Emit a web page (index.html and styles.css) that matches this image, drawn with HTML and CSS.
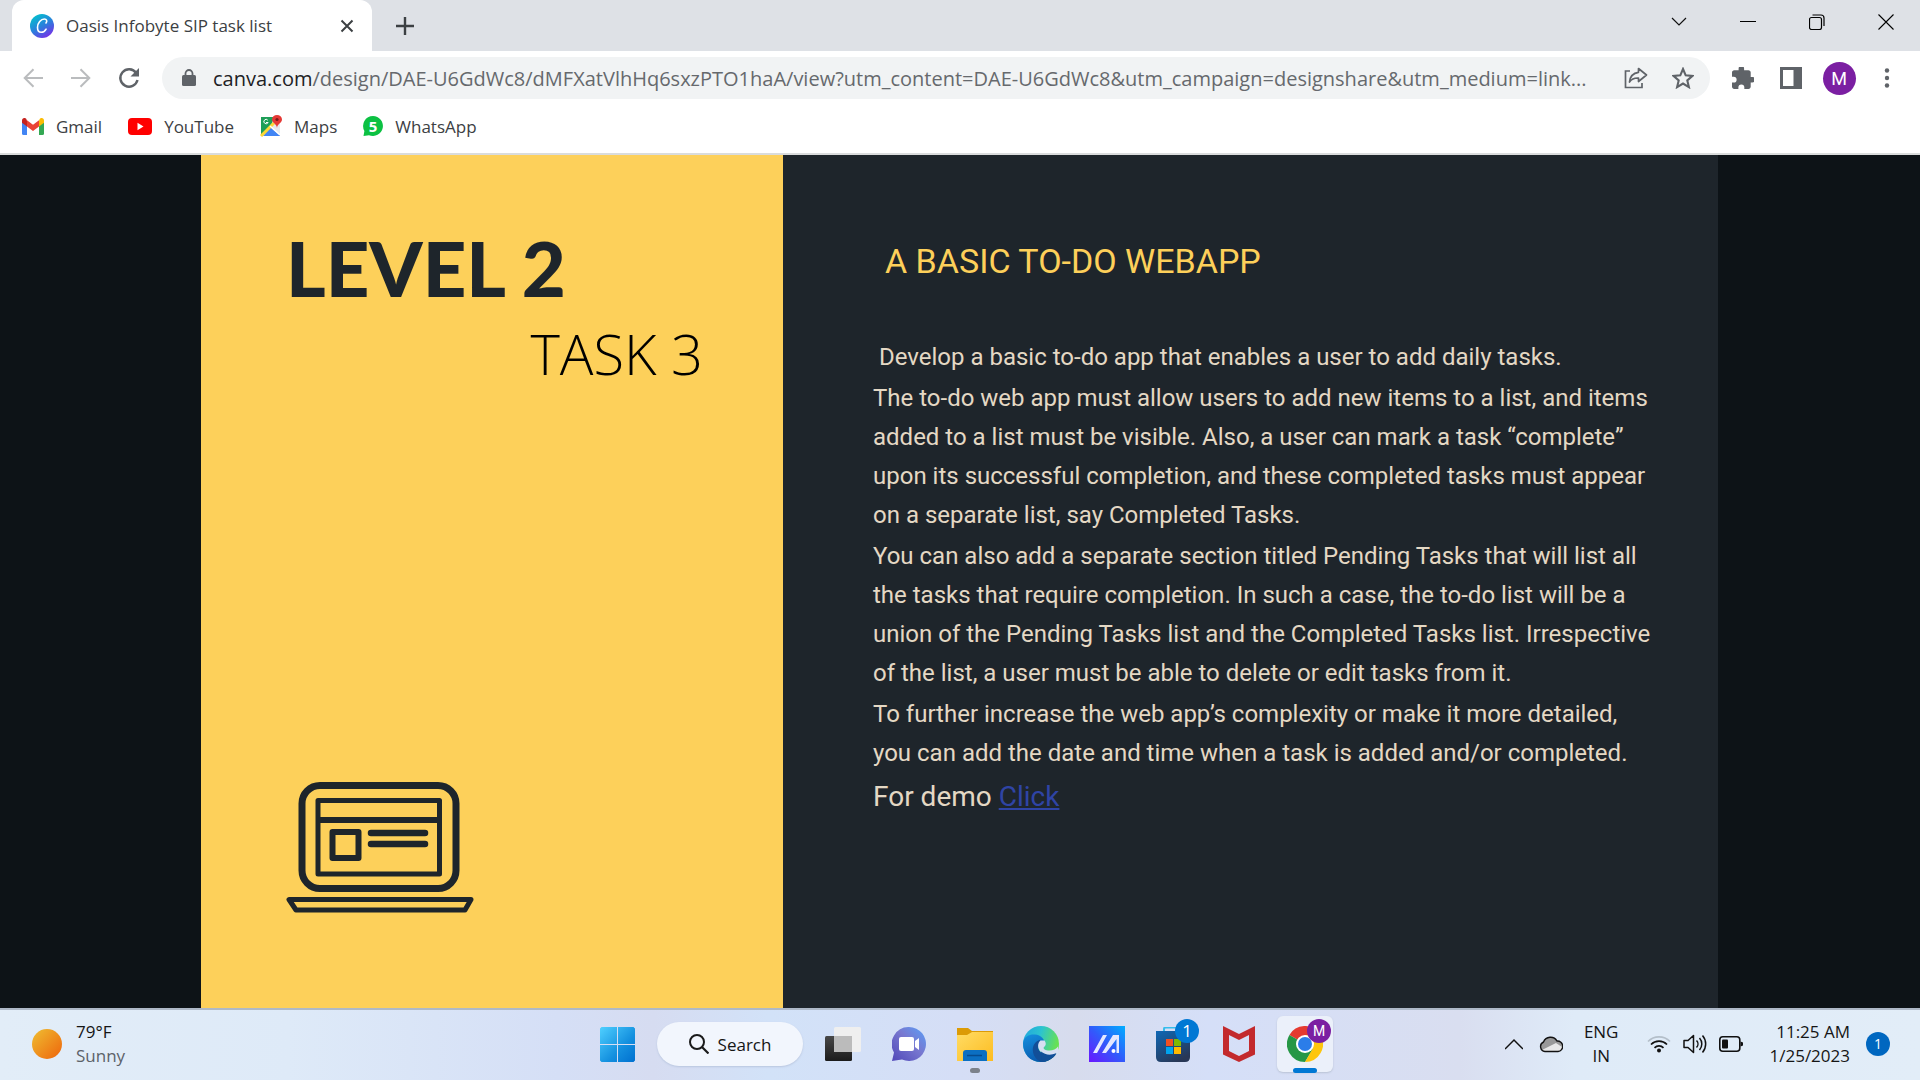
FILE: index.html
```html
<!DOCTYPE html>
<html lang="en">
<head>
<meta charset="utf-8">
<meta name="viewport" content="width=device-width, initial-scale=1">
<title>Oasis Infobyte SIP task list</title>
<link rel="stylesheet" href="styles.css">
</head>
<body>
<header class="browser">
  <div class="tabstrip">
    <div class="tab">
      <svg class="favicon" viewBox="0 0 24 24" aria-hidden="true"><defs><linearGradient id="canva" x1="0.2" y1="0" x2="0.8" y2="1"><stop offset="0" stop-color="#00c4cc"/><stop offset="0.5" stop-color="#2a80dc"/><stop offset="1" stop-color="#7d2ae8"/></linearGradient></defs><circle cx="12" cy="12" r="12" fill="url(#canva)"/><path d="M16 9c1.500-2 .6-4-1.600-4C11 5 7.500 9 7.500 13.500c0 3 1.500 4.800 3.700 4.800 2.200 0 4-1.500 4.900-3.200" fill="none" stroke="#fff" stroke-width="1.600" stroke-linecap="round"/></svg>
      <span class="tab-title">Oasis Infobyte SIP task list</span>
      <button class="icon-btn tab-close" aria-label="Close tab"><svg width="14" height="14" viewBox="0 0 14 14"><path d="M1.500 1.500l11 11M12.500 1.500l-11 11" stroke="#3c4043" stroke-width="2" fill="none"/></svg></button>
    </div>
    <button class="icon-btn new-tab" aria-label="New tab"><svg width="18" height="18" viewBox="0 0 18 18"><path d="M9 0v18M0 9h18" stroke="#3c4043" stroke-width="2.400"/></svg></button>
    <div class="window-controls">
      <button class="icon-btn win-btn" aria-label="Search tabs"><svg width="16" height="16" viewBox="0 0 16 16"><path d="M1 4l7 7 7-7" fill="none" stroke="#111" stroke-width="1.200"/></svg></button>
      <button class="icon-btn win-btn" aria-label="Minimize"><svg width="16" height="16" viewBox="0 0 16 16"><path d="M0 7.500h16" stroke="#000"/></svg></button>
      <button class="icon-btn win-btn" aria-label="Restore"><svg width="16" height="16" viewBox="0 0 16 16"><rect x=".5" y="3.500" width="12" height="12" rx="2" fill="none" stroke="#000" stroke-width="1.200"/><path d="M3.500 1h8.500q3 0 3 3v8" fill="none" stroke="#000" stroke-width="1.200"/></svg></button>
      <button class="icon-btn win-btn" aria-label="Close"><svg width="16" height="16" viewBox="0 0 16 16"><path d="M.5 .5l15 15M15.500 .5l-15 15" stroke="#000" stroke-width="1.100"/></svg></button>
    </div>
  </div>

  <nav class="toolbar">
    <button class="icon-btn nav-btn" aria-label="Back"><svg width="20" height="20" viewBox="0 0 20 20"><path d="M20 10H2M10.500 1.200L1.700 10l8.800 8.800" fill="none" stroke="#babcbe" stroke-width="2"/></svg></button>
    <button class="icon-btn nav-btn" aria-label="Forward"><svg width="20" height="20" viewBox="0 0 20 20"><path d="M0 10h18M9.500 1.200l8.800 8.800-8.800 8.800" fill="none" stroke="#babcbe" stroke-width="2"/></svg></button>
    <button class="icon-btn nav-btn" aria-label="Reload"><svg width="22" height="22" viewBox="0 0 22 22"><path d="M18.200 6A8.700 8.700 0 1 0 19.500 13" fill="none" stroke="#5f6368" stroke-width="2.400"/><path d="M21 1v8.500h-8.500z" fill="#5f6368"/></svg></button>
    <div class="omnibox">
      <svg width="14" height="18" viewBox="0 0 14 18" aria-hidden="true"><rect x="0" y="6" width="14" height="11" rx="1.500" fill="#5f6368"/><path d="M3.500 7V4.500a3.500 3.500 0 0 1 7 0V7" fill="none" stroke="#5f6368" stroke-width="1.800"/></svg>
      <a class="url" href="#"><span class="host">canva.com</span>/design/DAE-U6GdWc8/dMFXatVlhHq6sxzPTO1haA/view?utm_content=DAE-U6GdWc8&amp;utm_campaign=designshare&amp;utm_medium=link...</a>
      <button class="icon-btn share" aria-label="Share"><svg width="24" height="22" viewBox="0 0 24 22"><path d="M6 4H1.500v16.500H18V16" fill="none" stroke="#5f6368" stroke-width="1.700"/><path d="M14.500 1.500l8 6.500-8 6.500V11c-4-.2-7 1-9 4 .5-5 3.500-9 9-9.700z" fill="none" stroke="#5f6368" stroke-width="1.700" stroke-linejoin="round"/></svg></button>
      <button class="icon-btn" aria-label="Bookmark this tab"><svg width="22" height="22" viewBox="0 0 22 22"><path d="M11 2l2.700 6.300 6.800.6-5.200 4.500 1.600 6.700-5.900-3.600-5.900 3.600 1.600-6.700L1.500 8.900l6.800-.6z" fill="none" stroke="#5f6368" stroke-width="2.100"/></svg></button>
    </div>
    <div class="actions">
      <button class="icon-btn action" aria-label="Extensions"><svg width="22" height="22" viewBox="2 2 20 20"><path fill="#5f6368" d="M20.500 11H19V7c0-1.100-.9-2-2-2h-4V3.500a2.500 2.500 0 0 0-5 0V5H4c-1.100 0-2 .9-2 2v3.800h1.500a2.700 2.700 0 0 1 0 5.400H2V20c0 1.100.9 2 2 2h3.800v-1.500a2.700 2.700 0 0 1 5.400 0V22H17c1.100 0 2-.9 2-2v-4h1.500a2.500 2.500 0 0 0 0-5z"/></svg></button>
      <button class="icon-btn action" aria-label="Side panel"><svg width="22" height="22" viewBox="0 0 22 22"><path fill="#5f6368" fill-rule="evenodd" d="M0 0h22v22H0zM3 3v16h10.500V3z"/></svg></button>
      <button class="icon-btn action" aria-label="Profile"><span class="avatar">M</span></button>
      <button class="icon-btn action" aria-label="Menu"><svg width="6" height="20" viewBox="0 0 6 20" fill="#5f6368"><circle cx="3" cy="2.500" r="2.200"/><circle cx="3" cy="10" r="2.200"/><circle cx="3" cy="17.500" r="2.200"/></svg></button>
    </div>
  </nav>

  <nav class="bookmarks">
    <a href="#" class="bookmark"><svg width="22" height="17" viewBox="0 0 22 17"><path d="M0 2v13.500Q0 17 1.500 17H5V7z" fill="#4285f4"/><path d="M22 2v13.500q0 1.500-1.500 1.500H17V7z" fill="#34a853"/><path d="M17 2.500V8.500l5-3.800V2.500c0-2.200-2.400-3.200-4-2z" fill="#fbbc04"/><path d="M0 2.500v2.200l5 3.800V2.500L4 .5C2.400-.7 0 .3 0 2.500z" fill="#c5221f"/><path d="M5 2.200l6 4.500 6-4.500v6.300L11 13 5 8.500z" fill="#ea4335"/></svg>Gmail</a>
    <a href="#" class="bookmark"><svg width="24" height="17" viewBox="0 0 24 17"><rect width="24" height="17" rx="4" fill="#f00"/><path d="M9.500 4.800v7.400l6-3.700z" fill="#fff"/></svg>YouTube</a>
    <a href="#" class="bookmark"><svg width="22" height="22" viewBox="0 0 22 22"><path d="M1 2h19v19H1z" fill="#e8eaed"/><path d="M1 2h13L11 11 1 21z" fill="#1e9e57"/><path d="M10 12l10 8.500V21H3z" fill="#4285f4"/><path d="M1 21L14 8" stroke="#fdd835" stroke-width="3"/><path d="M10 11l10 9" stroke="#fff" stroke-width="1.500"/><path d="M7.800 5.200a2.200 2.200 0 1 0 .3 2.300H6" fill="none" stroke="#fff" stroke-width="1"/><path d="M17 13c0-4-5-5-5-8.500a5 4.500 0 0 1 10 0C22 8 17 9 17 13z" fill="#e53935"/><circle cx="17" cy="4.500" r="1.600" fill="#7b1a1a"/></svg>Maps</a>
    <a href="#" class="bookmark"><svg width="20" height="20" viewBox="0 0 20 20"><path d="M10 0a10 10 0 1 1-4 19.200L.5 20l.9-5A10 10 0 0 1 10 0z" fill="#0cc143"/><text x="10" y="15.500" text-anchor="middle" class="wa-count">5</text></svg>WhatsApp</a>
  </nav>
</header>

<main class="slide">
  <section class="cover">
    <h1 class="level">LEVEL 2</h1>
    <p class="task">TASK 3</p>
    <svg class="laptop" width="188" height="131" viewBox="0 0 188 131" fill="none" stroke="#1e252b" aria-hidden="true"><rect x="16" y="3.500" width="154" height="103" rx="18" stroke-width="7"/><path d="M32 18.500h121.500v73.500H32z" stroke-width="5" stroke-linejoin="round"/><path d="M32 38h121" stroke-width="6"/><rect x="46.500" y="50" width="26" height="26" stroke-width="6" stroke-linejoin="round"/><path d="M85 51h54M85 62h54" stroke-width="6.500" stroke-linecap="round"/><path d="M3 117.500h182l-6 10.500H10z" stroke-width="5" stroke-linejoin="round"/></svg>
  </section>
  <article class="brief">
    <h2>A BASIC TO-DO WEBAPP</h2>
    <div class="copy">
      <p>&nbsp;Develop a basic to-do app that enables a user to add daily tasks.</p>
      <p>The to-do web app must allow users to add new items to a list, and items<br>added to a list must be visible. Also, a user can mark a task “complete”<br>upon its successful completion, and these completed tasks must appear<br>on a separate list, say Completed Tasks.</p>
      <p>You can also add a separate section titled Pending Tasks that will list all<br>the tasks that require completion. In such a case, the to-do list will be a<br>union of the Pending Tasks list and the Completed Tasks list. Irrespective<br>of the list, a user must be able to delete or edit tasks from it.</p>
      <p>To further increase the web app’s complexity or make it more detailed,<br>you can add the date and time when a task is added and/or completed.</p>
    </div>
    <p class="demo">For demo <a href="#">Click</a></p>
  </article>
</main>

<footer class="taskbar">
  <div class="weather">
    <span class="sun"></span>
    <div class="stack"><span>79°F</span><span class="muted">Sunny</span></div>
  </div>
  <div class="apps">
    <button class="app" aria-label="Start"><svg width="35" height="35" viewBox="0 0 35 35"><defs><linearGradient id="win" x1="0" y1="0" x2="1" y2="1"><stop offset="0" stop-color="#4fd0ff"/><stop offset="0.6" stop-color="#1490df"/><stop offset="1" stop-color="#0070d0"/></linearGradient></defs><path fill="url(#win)" d="M1.500 0H17v17H0V1.500zM18 0h15.500L35 1.500V17H18zM0 18h17v17H1.500L0 33.500zM18 18h17v15.500L33.500 35H18z"/></svg></button>
    <button class="search"><svg width="20" height="20" viewBox="0 0 20 20"><circle cx="8" cy="8" r="7" fill="none" stroke="#1a1a1a" stroke-width="2"/><path d="M13 13l6.500 6.500" stroke="#1a1a1a" stroke-width="2.200"/></svg>Search</button>
    <button class="app" aria-label="Task view"><svg width="36" height="34" viewBox="0 0 36 34"><defs><linearGradient id="tv" x1="0" y1="0" x2="0" y2="1"><stop offset="0" stop-color="#484848"/><stop offset="1" stop-color="#1b1b1b"/></linearGradient></defs><rect y="9" width="27" height="25" rx="1.500" fill="url(#tv)"/><rect x="9" width="27" height="25" rx="1.500" fill="#efefef"/><path d="M9 9h18v16H9z" fill="#bbb"/></svg></button>
    <button class="app" aria-label="Chat"><svg width="34" height="34" viewBox="0 0 34 34"><defs><linearGradient id="chat" x1="1" y1="0" x2="0" y2="1"><stop offset="0" stop-color="#5aa0f8"/><stop offset="0.450" stop-color="#7878d0"/><stop offset="1" stop-color="#5047b8"/></linearGradient></defs><path d="M17 0a17 17 0 1 1-7 32.500L0 34l2-8.500A17 17 0 0 1 17 0z" fill="url(#chat)"/><rect x="7" y="10" width="15" height="14" rx="2" fill="#fff"/><path d="M23 14l4-3v12l-4-3z" fill="#fff"/></svg></button>
    <button class="app" aria-label="File Explorer"><svg width="36" height="33" viewBox="0 0 36 33"><defs><linearGradient id="fold" x1="0" y1="0" x2="1" y2="1"><stop offset="0" stop-color="#ffdc65"/><stop offset="1" stop-color="#fdbc20"/></linearGradient></defs><path d="M0 0h11l4 3h21v10H0z" fill="#dc9b06"/><path d="M0 7h10l5-3h21v29H0z" fill="url(#fold)"/><path d="M6 33v-8q0-3 3-3h18q3 0 3 3v8z" fill="#0b6fc2"/><path d="M10 27.500h15" stroke="#064b8e" stroke-width="1.500"/></svg><span class="running"></span></button>
    <button class="app" aria-label="Edge"><svg width="36" height="36" viewBox="0 0 36 36"><defs><linearGradient id="eg" x1="0" y1="0" x2="1" y2="0.300"><stop offset="0" stop-color="#1fa5df"/><stop offset="0.500" stop-color="#2cc3d0"/><stop offset="1" stop-color="#67e154"/></linearGradient><linearGradient id="eb" x1="0" y1="0" x2="0.400" y2="1"><stop offset="0" stop-color="#1490df"/><stop offset="1" stop-color="#0a5aae"/></linearGradient></defs><circle cx="18" cy="18" r="18" fill="url(#eg)"/><path d="M0 17C1 10 7 8 12 8.500c6 .5 10 5 10 9.500h-3c-3 1-5 4-3 8 3 5 11 5 16 1-3 6-8 9-14 9C7 36 0 28 0 17z" fill="url(#eb)"/><path d="M17 14c-5 1-8 6-7 12 1 5 4 8 8 10 6 0 12-3 15.500-8.500-5 3-12 2.500-16-1.500-3-3-3.500-7 0-9z" fill="#124f98"/><path d="M21.500 14.500c2 3 1.500 5-.5 6.500-1 1 0 3 4 3.500 4 .5 8-1 10-4V30l-1-2.500c-5 3-12 2.500-16-1.500-4-4-3.500-9-.5-11.500z" fill="#d6dff2"/><path d="M18 25.500c4 3 9 4.500 15.300 1.500-3 6-9 8.500-14 9z" fill="#124f98"/></svg></button>
    <button class="app" aria-label="MyASUS"><svg width="36" height="36" viewBox="0 0 36 36"><defs><linearGradient id="asus" x1="0" y1="1" x2="1" y2="0"><stop offset="0" stop-color="#6a16ff"/><stop offset="0.500" stop-color="#315bfb"/><stop offset="1" stop-color="#00aeff"/></linearGradient></defs><path fill="url(#asus)" d="M0 0h36v36H0z"/><path d="M4 27L14 9h4L8 27zM13 27L24 9h6v18h-2.500V13L17 27z" fill="#e4e8ff"/><circle cx="24.500" cy="25" r="2" fill="#fff"/></svg></button>
    <button class="app" aria-label="Microsoft Store"><svg width="36" height="35" viewBox="0 0 36 35"><defs><linearGradient id="store" x1="0" y1="0" x2="0.600" y2="1"><stop offset="0" stop-color="#0f68b6"/><stop offset="1" stop-color="#283756"/></linearGradient></defs><path d="M9 6V2q0-1.500 1.500-1.500H25V6" fill="none" stroke="#35bdec" stroke-width="2"/><path d="M1 4h34v26q0 5-5 5H6q-5 0-5-5z" fill="url(#store)"/><path fill="#f25022" d="M11 12h7v7h-7z"/><path fill="#7fba00" d="M19 12h7v7h-7z"/><path fill="#00a4ef" d="M11 20h7v7h-7z"/><path fill="#ffb900" d="M19 20h7v7h-7z"/></svg><span class="badge">1</span></button>
    <button class="app" aria-label="McAfee"><svg width="32" height="36" viewBox="0 0 32 36"><path fill="#c32a2d" fill-rule="evenodd" d="M0 0l16 8 16-8v28.500L16 36 0 28.500zM6 9v16l10 5 10-5V9l-10 5z"/></svg></button>
    <button class="app" aria-label="Google Chrome"><span class="tile"><svg width="36" height="36" viewBox="0 0 36 36"><path d="M18 18L2.400 9a18 18 0 0 1 31.200 0z" fill="#e53a30"/><path d="M18 18L2.400 9A18 18 0 0 0 18 36l8-13z" fill="#269746"/><path d="M18 9h15.600A18 18 0 0 1 18 36l7.800-13.500z" fill="#fdc60d"/><circle cx="18" cy="18" r="9" fill="#fff"/><circle cx="18" cy="18" r="7" fill="#2b7de9"/></svg></span><span class="badge profile">M</span><span class="running active"></span></button>
  </div>
  <div class="tray">
    <button class="icon-btn" aria-label="Show hidden icons"><svg width="18" height="12" viewBox="0 0 18 12"><path d="M0 11l9-9 9 9" fill="none" stroke="#111" stroke-width="1.500"/></svg></button>
    <svg width="24" height="18" viewBox="0 0 24 18" aria-hidden="true"><path d="M6 16.500A5 5 0 0 1 4.500 7 7.500 7.500 0 0 1 18 6a5 5 0 0 1 1 10.500z" fill="#999"/><path d="M3 15L17 8l6 4q-.5 4.500-4 4.500H6z" fill="#e8e8e8"/><path d="M6 16.500A5 5 0 0 1 4.500 7 7.500 7.500 0 0 1 18 6a5 5 0 0 1 1 10.500z" fill="none" stroke="#111" stroke-width="1.400"/></svg>
    <div class="stack center lang"><span>ENG</span><span>IN</span></div>
    <div class="status">
      <svg width="24" height="18" viewBox="0 0 24 18" fill="none" stroke="#111" stroke-width="1.700" aria-hidden="true"><path d="M1 6.500a15.500 15.500 0 0 1 22 0" stroke="#b4bfca"/><path d="M4 9.500a11.300 11.300 0 0 1 16 0M7.500 12.800a6.400 6.400 0 0 1 9 0"/><circle cx="12" cy="15.500" r="2" fill="#111" stroke="none"/></svg>
      <svg width="24" height="20" viewBox="0 0 24 20" fill="none" stroke="#111" stroke-width="1.500" aria-hidden="true"><path d="M1 6.500h4l5.500-5v17L5 13.500H1z" stroke-linejoin="round"/><path d="M13.500 6.500a5 5 0 0 1 0 7M16.500 4a9 9 0 0 1 0 12M19.500 1.500a13 13 0 0 1 0 17"/></svg>
      <svg width="24" height="16" viewBox="0 0 24 16" aria-hidden="true"><rect x=".8" y=".8" width="20" height="14.400" rx="3" fill="none" stroke="#111" stroke-width="1.600"/><rect x="3" y="3.500" width="6" height="9" rx="1" fill="#111"/><path d="M21.500 5.500l2.500 1v3l-2.500 1z" fill="#111"/></svg>
    </div>
    <div class="stack end"><span>11:25 AM</span><span>1/25/2023</span></div>
    <span class="count">1</span>
  </div>
</footer>
</body>
</html>
```
FILE: styles.css
```css
* { box-sizing: border-box; }

body {
  margin: 0;
  min-height: 100vh;
  display: flex;
  flex-direction: column;
  font-family: "Open Sans", "Noto Sans", sans-serif;
  font-size: 17px;
  color: #3c4043;
  background: #0d1317;
}

h1, h2, p { margin: 0; }
svg { display: block; flex: none; }
a { color: inherit; text-decoration: none; }

button {
  margin: 0;
  padding: 0;
  border: 0;
  background: none;
  font: inherit;
  color: inherit;
}

.icon-btn {
  display: flex;
  align-items: center;
  justify-content: center;
  flex: none;
}

/* Browser frame */
.browser { background: #fff; border-bottom: 2px solid #dadcdc; }

.tabstrip {
  display: flex;
  align-items: center;
  height: 51px;
  padding-left: 12px;
  background: #dee1e6;
}

.tab {
  display: flex;
  align-items: center;
  align-self: stretch;
  width: 360px;
  padding: 0 18px;
  background: #fff;
  border-radius: 12px 12px 0 0;
}

.favicon { width: 24px; height: 24px; }
.tab-title { flex: 1; padding-left: 12px; white-space: nowrap; }
.new-tab { width: 66px; }
.window-controls { display: flex; align-self: flex-start; margin-left: auto; }
.win-btn { width: 69px; height: 43px; }

.toolbar {
  display: flex;
  align-items: center;
  height: 54px;
}

.nav-btn { width: 48px; }
.nav-btn:first-child { margin-left: 9px; }

.omnibox {
  display: flex;
  flex: 1;
  align-items: center;
  gap: 17px;
  min-width: 0;
  height: 42px;
  margin-left: 9px;
  padding: 0 16px 0 20px;
  border-radius: 21px;
  background: #f1f3f4;
}

.url {
  flex: 1;
  min-width: 0;
  overflow: hidden;
  white-space: nowrap;
  font-size: 20px;
  color: #66696d;
}

.host { color: #202124; }
.share { margin-right: 7px; }

.actions { display: flex; align-items: center; padding: 0 9px; }
.action { width: 48px; }

.avatar {
  width: 33px;
  height: 33px;
  border-radius: 50%;
  background: #7b1fa2;
  color: #fff;
  font: 18px/33px Roboto, sans-serif;
  text-align: center;
}

.bookmarks {
  display: flex;
  align-items: center;
  gap: 26px;
  height: 48px;
  padding: 0 22px 6px;
}

.bookmark { display: flex; align-items: center; gap: 12px; }
.wa-count { font: 700 15px "Open Sans", sans-serif; fill: #fff; }

/* Presentation */
.slide {
  flex: 1;
  display: grid;
  grid-template-columns: 201fr 582fr 935fr 202fr;
}

.cover {
  grid-column: 2;
  display: flex;
  flex-direction: column;
  padding: 73px 80px 95px 85px;
  background: #fdd05a;
}

.level {
  font: 900 76px/80px Lato, sans-serif;
  color: #1e252b;
}

.task {
  align-self: flex-end;
  font-size: 56px;
  font-weight: 340;
  line-height: 90px;
  color: #000;
}

.laptop { margin-top: auto; }

.brief {
  grid-column: 3;
  padding: 83px 60px 80px 90px;
  background: #1e252b;
  color: #e4d8c4;
  font-family: Roboto, sans-serif;
}

.brief h2 {
  padding-left: 12px;
  font-size: 34px;
  font-weight: 400;
  line-height: 46px;
  color: #fdd05a;
}

.copy {
  display: flex;
  flex-direction: column;
  gap: 2px;
  padding-top: 54px;
  font-size: 24px;
  line-height: 39px;
}

.demo { font-size: 28px; line-height: 48px; }
.demo a { color: #2f44a5; text-decoration: underline; }

/* Taskbar */
.taskbar {
  display: grid;
  grid-template-columns: 1fr auto 1fr;
  align-items: center;
  height: 72px;
  padding-bottom: 2px;
  border-top: 2px solid #aeb9c8;
  background: linear-gradient(90deg, #e2edf8 0%, #deeaf8 15%, #d5dff6 29%, #d6dcf1 34%, #d2e2f8 40%, #d5def6 50%, #d7dced 56%, #d5dff8 63%, #d9def0 76%, #dfebf8 82%, #e2edf8 100%);
  color: #151515;
}

.weather { display: flex; align-items: center; gap: 14px; padding-left: 32px; }

.sun {
  width: 30px;
  height: 30px;
  border-radius: 50%;
  background: linear-gradient(135deg, #efbe32, #ee640b);
}

.stack { display: flex; flex-direction: column; line-height: 24px; }
.center { align-items: center; }
.end { align-items: flex-end; }
.muted { color: #5c6269; }

.apps { display: flex; align-items: center; padding-left: 2px; }

.app {
  position: relative;
  display: flex;
  align-items: center;
  justify-content: center;
  width: 66px;
  height: 68px;
}

.search {
  display: flex;
  align-items: center;
  justify-content: center;
  gap: 9px;
  width: 146px;
  height: 44px;
  margin: 0 7px;
  border-radius: 22px;
  background: #f2f6fd;
  box-shadow: 0 1px 2px #b9c6df;
}

.tile {
  display: flex;
  align-items: center;
  justify-content: center;
  width: 56px;
  height: 56px;
  border-radius: 6px;
  background: #ebf0fa;
  box-shadow: 0 1px 2px #b9c2d4;
}

.running {
  position: absolute;
  bottom: 5px;
  left: 50%;
  width: 10px;
  height: 5px;
  margin-left: -5px;
  border-radius: 3px;
  background: #7c828b;
}

.running.active { width: 24px; margin-left: -12px; background: #0078d4; }

.badge {
  position: absolute;
  top: 9px;
  right: 7px;
  width: 24px;
  height: 24px;
  border-radius: 50%;
  background: #0078d4;
  color: #fff;
  line-height: 24px;
  text-align: center;
}

.badge.profile { background: #7b1fa2; font: 14px/24px Roboto, sans-serif; }

.tray {
  display: flex;
  align-items: center;
  justify-content: flex-end;
  gap: 16px;
  padding-right: 30px;
}

.lang { padding: 0 5px; }
.status { display: flex; align-items: center; gap: 12px; margin: 0 10px 0 8px; }

.count {
  width: 24px;
  height: 24px;
  border-radius: 50%;
  background: #0067c0;
  color: #fff;
  font-size: 14px;
  line-height: 24px;
  text-align: center;
}
```
